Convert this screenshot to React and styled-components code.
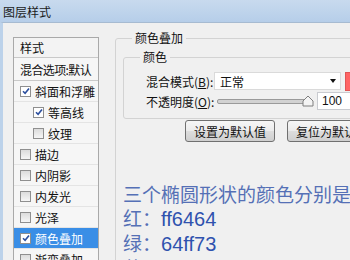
import React from 'react';
import styled, { createGlobalStyle } from 'styled-components';

const GlobalStyle = createGlobalStyle`
  html, body {
    margin: 0;
    padding: 0;
    overflow: hidden;
    background: #f0f0f0;
  }
`;

const Window = styled.div`
  width: 350px;
  height: 260px;
  display: flex;
  flex-direction: column;
  overflow: hidden;
  font-family: "Noto Sans CJK SC", "DejaVu Sans", sans-serif;
  font-size: 12px;
  color: #111;
`;

const TitleBar = styled.div`
  height: 22px;
  flex: none;
  display: flex;
  align-items: center;
  padding-left: 3px;
  background: linear-gradient(#c8daee, #b6cee9);
  color: #1a1a1a;
  font-size: 12px;
`;

const Client = styled.div`
  flex: 1;
  display: flex;
  background: #f0f0f0;
  border-left: 3px solid #bcd2ea;
  border-top: 1px solid #a7bbd1;
  min-height: 0;
`;

const Sidebar = styled.div`
  flex: none;
  padding: 14px 0 0 10px;
`;

const StyleList = styled.div`
  width: 84px;
  border: 1px solid #a9a9a9;
  background: #f6f6f6;
`;

const ListHeader = styled.div`
  height: 19px;
  display: flex;
  align-items: center;
  padding-left: 6px;
  border-bottom: 1px solid #c9c9c9;
  background: #f3f3f3;
`;

const ListRow = styled.div`
  height: ${p => p.$h || 20}px;
  display: flex;
  align-items: center;
  gap: 4px;
  padding-left: ${p => 6 + (p.$indent ? 13 : 0)}px;
  border-bottom: 1px solid ${p => (p.$strong ? '#c9c9c9' : '#e4e4e4')};
  background: ${p => (p.$selected ? '#3a8ee6' : 'transparent')};
  color: ${p => (p.$selected ? '#fff' : '#111')};
  letter-spacing: ${p => (p.$tight ? '-0.6px' : '0')};
  white-space: nowrap;
  overflow: hidden;
`;

const Box = styled.span`
  width: 9px;
  height: 9px;
  flex: none;
  border: 1px solid #8f8f8f;
  background: ${p => (p.$checked ? '#fff' : 'linear-gradient(#dcdcdc, #f6f6f6)')};
  display: flex;
  align-items: center;
  justify-content: center;
`;

const Check = () => (
  <svg width="8" height="8" viewBox="0 0 8 8">
    <path d="M1 4.2 L3.1 6.3 L7 1.4" fill="none" stroke="#2c4f9e" strokeWidth="1.6" />
  </svg>
);

const Main = styled.div`
  flex: none;
  margin-left: 16px;
  padding-top: 7px;
`;

const Group = styled.fieldset`
  margin: ${p => p.$margin || '0'};
  padding: 0;
  width: ${p => p.$width}px;
  min-width: 0;
  border: 1px solid #d3d3d3;
  border-radius: 3px;
`;

const Legend = styled.legend`
  margin-left: 16px;
  padding: 0 3px;
  font-size: 12px;
  line-height: 16px;
  color: #111;
`;

const Fields = styled.div`
  padding: 7px 0 8px 22px;
  display: flex;
  flex-direction: column;
  gap: 2px;
`;

const FieldRow = styled.div`
  height: 18px;
  display: flex;
  align-items: center;
`;

const Label = styled.span`
  width: 66px;
  flex: none;
  white-space: nowrap;
  u {
    text-decoration: underline;
  }
`;

const Select = styled.div`
  width: 122px;
  height: 16px;
  margin-left: 2px;
  border: 1px solid #dadada;
  background: #fff;
  display: flex;
  align-items: center;
  justify-content: space-between;
  padding: 0 4px 0 5px;
  box-sizing: content-box;
`;

const Arrow = styled.span`
  width: 0;
  height: 0;
  border-left: 3.5px solid transparent;
  border-right: 3.5px solid transparent;
  border-top: 4px solid #111;
`;

const Swatch = styled.div`
  width: 18px;
  height: 17px;
  margin-left: 4px;
  background: #ff6464;
  border: 1px solid #e05555;
`;

const Slider = styled.div`
  width: 97px;
  height: 12px;
  margin-left: 5px;
  display: flex;
  align-items: center;
`;

const Track = styled.div`
  flex: 1;
  height: 3px;
  border-radius: 2px;
  border: 1px solid #9a9a9a;
  background: #d2d2d2;
`;

const Thumb = () => (
  <svg width="12" height="12" viewBox="0 0 12 12" style={{ marginLeft: -9 }}>
    <path d="M6 1 L11 6 L11 11 L1 11 L1 6 Z" fill="#f4f4f4" stroke="#7e7e7e" />
  </svg>
);

const NumberBox = styled.div`
  width: 40px;
  height: 16px;
  margin-left: 3px;
  border: 1px solid #c9cbd0;
  background: #fff;
  display: flex;
  align-items: center;
  padding-left: 4px;
  font-family: "Liberation Sans", sans-serif;
  font-size: 12px;
`;

const Buttons = styled.div`
  display: flex;
  gap: 12px;
  margin-top: 1px;
  padding-left: 69px;
`;

const Button = styled.button`
  width: 90px;
  height: 22px;
  flex: none;
  padding: 0;
  border: 1px solid #707070;
  border-radius: 3px;
  background: linear-gradient(#f6f6f6 0%, #ebebeb 50%, #dddddd 51%, #cfcfcf 100%);
  font-family: inherit;
  font-size: 12px;
  color: #111;
  white-space: nowrap;
`;

const Note = styled.div`
  margin-top: 40px;
  padding-left: 7px;
  font-size: 19px;
  line-height: 24px;
  color: #5570b6;
  white-space: nowrap;
`;

const Hex = styled.span`
  font-family: "Liberation Sans", sans-serif;
  font-size: 20px;
  color: #2f52ae;
`;

const items = [
  { name: '斜面和浮雕', checked: true },
  { name: '等高线', checked: true, indent: true },
  { name: '纹理', indent: true },
  { name: '描边' },
  { name: '内阴影' },
  { name: '内发光' },
  { name: '光泽' },
  { name: '颜色叠加', checked: true, selected: true },
  { name: '渐变叠加' },
];

const colors = [
  ['红', 'ff6464'],
  ['绿', '64ff73'],
  ['蓝', '6473ff'],
];

export default function App() {
  return (
    <Window>
      <GlobalStyle />
      <TitleBar>图层样式</TitleBar>
      <Client>
        <Sidebar>
          <StyleList>
            <ListHeader>样式</ListHeader>
            <ListRow $h={22} $strong $tight>混合选项:默认</ListRow>
            {items.map(it => (
              <ListRow key={it.name} $indent={it.indent} $selected={it.selected}>
                <Box $checked={it.checked}>{it.checked && <Check />}</Box>
                {it.name}
              </ListRow>
            ))}
          </StyleList>
        </Sidebar>
        <Main>
          <Group $width={260}>
            <Legend>颜色叠加</Legend>
            <Group $width={240} $margin="3px 0 0 7px">
              <Legend>颜色</Legend>
              <Fields>
                <FieldRow>
                  <Label>混合模式(<u>B</u>):</Label>
                  <Select>
                    <span>正常</span>
                    <Arrow />
                  </Select>
                  <Swatch />
                </FieldRow>
                <FieldRow>
                  <Label>不透明度(<u>O</u>):</Label>
                  <Slider>
                    <Track />
                    <Thumb />
                  </Slider>
                  <NumberBox>100</NumberBox>
                </FieldRow>
              </Fields>
            </Group>
            <Buttons>
              <Button>设置为默认值</Button>
              <Button>复位为默认值</Button>
            </Buttons>
            <Note>
              <div>三个椭圆形状的颜色分别是</div>
              {colors.map(([c, v]) => (
                <div key={v}>
                  {c}：<Hex>{v}</Hex>
                </div>
              ))}
            </Note>
          </Group>
        </Main>
      </Client>
    </Window>
  );
}
